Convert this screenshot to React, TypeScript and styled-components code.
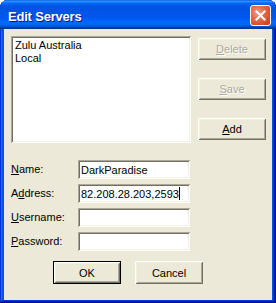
import styled, { createGlobalStyle } from "styled-components";

const GlobalStyle = createGlobalStyle`
  html, body {
    margin: 0;
    padding: 0;
    background: #fff;
  }
  body {
    font-family: "Liberation Sans", Arial, sans-serif;
    font-size: 11px;
  }
`

// ? XP window frame
const Window = styled.div`
  width: 276px;
  height: 303px;
  box-sizing: border-box;
  display: flex;
  flex-direction: column;
  background: #0054e3;
  border-radius: 8px 8px 0 0;
  overflow: hidden;
  box-shadow:
    inset -1px -1px #00138c,
    inset 1px 1px #0831d9,
    inset -2px -2px #001ea0,
    inset 2px 2px #166aee,
    inset -3px -3px #003bda,
    inset 3px 3px #0855dd;
`

const TitleBar = styled.div`
  height: 29px;
  box-sizing: border-box;
  padding: 2px 5px 0 8px;
  display: flex;
  align-items: center;
  justify-content: space-between;
  background: linear-gradient(
    to bottom,
    #0058ee 0%,
    #3593ff 4%,
    #288eff 6%,
    #127dff 8%,
    #036ffc 10%,
    #0262ee 14%,
    #0057e5 20%,
    #0054e3 24%,
    #0055eb 56%,
    #005bf5 66%,
    #026afe 76%,
    #0062ef 86%,
    #0052d6 92%,
    #0040ab 94%,
    #003092 100%
  );
`

const TitleText = styled.span`
  color: #fff;
  font-family: "Liberation Sans", Arial, sans-serif;
  font-weight: bold;
  font-size: 13px;
  letter-spacing: -0.2px;
  padding-top: 2px;
  text-shadow: 1px 1px #0f1089;
`

const CloseButton = styled.div`
  width: 21px;
  height: 21px;
  box-sizing: border-box;
  border: 1px solid #fff;
  border-radius: 3px;
  background: radial-gradient(circle at 35% 35%, #f4a184 0%, #e5704e 35%, #d9502c 70%, #c43d18 100%);
  display: flex;
  align-items: center;
  justify-content: center;
`

const Client = styled.div`
  flex: 1;
  margin: 0 4px 3px 4px;
  background: #ece9d8;
  padding: 7px 6px 0 7px;
  display: flex;
  flex-direction: column;
`

const TopArea = styled.div`
  display: flex;
  gap: 7px;
`

const sunken = `
  background: #fff;
  box-shadow:
    inset 1px 1px #aca899,
    inset -1px -1px #fff,
    inset 2px 2px #716f64,
    inset -2px -2px #f1efe2;
`

const ListBox = styled.div`
  width: 180px;
  height: 107px;
  box-sizing: border-box;
  padding: 3px 3px;
  ${sunken}
`

const ListItem = styled.div`
  height: 13px;
  line-height: 13px;
  padding-left: 1px;
  color: #000;
  white-space: nowrap;
`

const ButtonColumn = styled.div`
  display: flex;
  flex-direction: column;
  gap: 18px;
  padding-top: 2px;
`

const Button = styled.div<{ $disabled?: boolean; $default?: boolean; $height?: number }>`
  width: 68px;
  height: ${(props) => props.$height ?? 22}px;
  box-sizing: border-box;
  display: flex;
  align-items: center;
  justify-content: center;
  background: #ece9d8;
  color: ${(props) => (props.$disabled ? '#aca899' : '#000')};
  text-shadow: ${(props) => (props.$disabled ? '1px 1px #fff' : 'none')};
  border: ${(props) => (props.$default ? '1px solid #000' : 'none')};
  box-shadow:
    inset 1px 1px #fff,
    inset -1px -1px #716f64,
    inset 2px 2px #f1efe2,
    inset -2px -2px #aca899;
`

const FormGrid = styled.div`
  margin-top: 17px;
  display: grid;
  grid-template-columns: 67px 112px;
  grid-auto-rows: 19px;
  row-gap: 5px;
  align-items: center;
`

const Label = styled.span`
  color: #000;
  padding-bottom: 1px;
`

const Field = styled.div`
  height: 19px;
  box-sizing: border-box;
  padding: 0 3px;
  display: flex;
  align-items: center;
  color: #000;
  white-space: nowrap;
  ${sunken}
`

const Caret = styled.span`
  display: inline-block;
  width: 1px;
  height: 13px;
  background: #000;
`

const BottomRow = styled.div`
  margin-top: 10px;
  padding-left: 42px;
  display: flex;
  gap: 14px;
`

const App: React.FC = () => {
  return (
    <>
      <GlobalStyle />
      <Window>
        <TitleBar>
          <TitleText>Edit Servers</TitleText>
          <CloseButton>
            <svg width="11" height="11" viewBox="0 0 11 11">
              <path d="M1.5 1.5 L9.5 9.5 M9.5 1.5 L1.5 9.5" stroke="#fff" strokeWidth="2.1" strokeLinecap="square" />
            </svg>
          </CloseButton>
        </TitleBar>
        <Client>
          <TopArea>
            <ListBox>
              <ListItem>Zulu Australia</ListItem>
              <ListItem>Local</ListItem>
            </ListBox>
            <ButtonColumn>
              <Button $disabled><span><u>D</u>elete</span></Button>
              <Button $disabled><span><u>S</u>ave</span></Button>
              <Button><span><u>A</u>dd</span></Button>
            </ButtonColumn>
          </TopArea>
          <FormGrid>
            <Label><u>N</u>ame:</Label>
            <Field>DarkParadise</Field>
            <Label>A<u>d</u>dress:</Label>
            <Field>82.208.28.203,2593<Caret /></Field>
            <Label><u>U</u>sername:</Label>
            <Field />
            <Label><u>P</u>assword:</Label>
            <Field />
          </FormGrid>
          <BottomRow>
            <Button $default $height={23}>OK</Button>
            <Button $height={23}>Cancel</Button>
          </BottomRow>
        </Client>
      </Window>
    </>
  )
}

export default App
